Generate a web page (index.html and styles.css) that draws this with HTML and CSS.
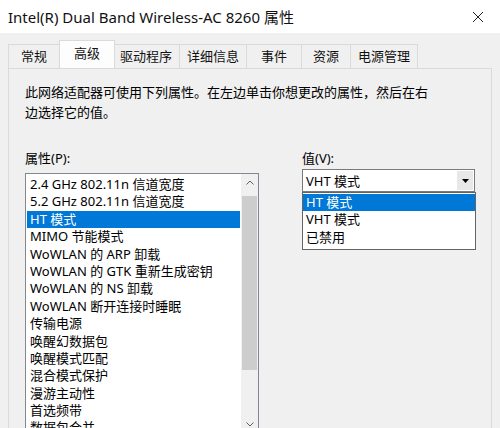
FILE: index.html
```html
<!DOCTYPE html>
<html lang="zh-CN">
<head>
  <meta charset="utf-8" />
  <title>属性</title>
  <link rel="stylesheet" href="styles.css">
</head>
<body>
  <div class="titlebar">
    <span class="title">Intel(R) Dual Band Wireless-AC 8260 属性</span>
    <svg class="close" width="12" height="12" viewBox="0 0 12 12">
      <path d="M1 1L11 11M11 1L1 11" stroke="#222" stroke-width="1" fill="none" />
    </svg>
  </div>

  <div class="tabs">
    <div class="tab">常规</div>
    <div class="tab active">高级</div>
    <div class="tab">驱动程序</div>
    <div class="tab">详细信息</div>
    <div class="tab">事件</div>
    <div class="tab">资源</div>
    <div class="tab">电源管理</div>
  </div>

  <div class="panel">
    <p class="desc">此网络适配器可使用下列属性。在左边单击你想更改的属性，然后在右<br>边选择它的值。</p>

    <div class="fields">
      <div class="col-left">
        <div class="label">属性(P):</div>
        <div class="listbox">
          <ul class="items">
            <li>2.4 GHz 802.11n 信道宽度</li>
            <li>5.2 GHz 802.11n 信道宽度</li>
            <li class="selected">HT 模式</li>
            <li>MIMO 节能模式</li>
            <li>WoWLAN 的 ARP 卸载</li>
            <li>WoWLAN 的 GTK 重新生成密钥</li>
            <li>WoWLAN 的 NS 卸载</li>
            <li>WoWLAN 断开连接时睡眠</li>
            <li>传输电源</li>
            <li>唤醒幻数据包</li>
            <li>唤醒模式匹配</li>
            <li>混合模式保护</li>
            <li>漫游主动性</li>
            <li>首选频带</li>
            <li>数据包合并</li>
          </ul>
          <div class="scrollbar">
            <div class="sb-btn">
              <svg width="8" height="5" viewBox="0 0 8 5"><path d="M0.5 4.5L4 1L7.5 4.5" stroke="#606060" fill="none" /></svg>
            </div>
            <div class="sb-track"><div class="sb-thumb"></div></div>
            <div class="sb-btn">
              <svg width="8" height="5" viewBox="0 0 8 5"><path d="M0.5 0.5L4 4L7.5 0.5" stroke="#606060" fill="none" /></svg>
            </div>
          </div>
        </div>
      </div>

      <div class="col-right">
        <div class="label">值(V):</div>
        <div class="combo">
          <span class="combo-value">VHT 模式</span>
          <span class="combo-arrow">
            <svg width="7" height="4" viewBox="0 0 7 4"><path d="M0 0H7L3.5 4Z" fill="#000" /></svg>
          </span>
        </div>
        <ul class="dropdown">
          <li class="selected">HT 模式</li>
          <li>VHT 模式</li>
          <li>已禁用</li>
        </ul>
      </div>
    </div>
  </div>
</body>
</html>
```

FILE: styles.css
```css
body {
  margin: 0;
  width: 500px;
  height: 428px;
  overflow: hidden;
  background: #f0f0f0;
  font-family: "Noto Sans", "Noto Sans CJK SC", sans-serif;
  font-size: 13px;
  color: #000;
}

.titlebar {
  height: 33px;
  background: #fff;
  display: flex;
  align-items: center;
  justify-content: space-between;
  padding: 0 16px 0 8px;
}

.title {
  font-size: 15px;
  color: #111;
}

.tabs {
  display: flex;
  align-items: flex-end;
  height: 27px;
  margin-top: 8px;
  padding-left: 8px;
}

.tab {
  height: 23px;
  line-height: 22px;
  min-width: 36px;
  padding: 0 7px;
  text-align: center;
  border: 1px solid #dadada;
  border-bottom: none;
  border-left: none;
  background: #f0f0f0;
  color: #111;
}

.tab:first-child {
  border-left: 1px solid #dadada;
  min-width: 36px;
}

.tab:nth-child(5) { min-width: 40px; }
.tab:nth-child(6) { min-width: 34px; }

.tab.active {
  height: 27px;
  line-height: 25px;
  min-width: 40px;
  background: #fdfdfd;
  border-left: 1px solid #dadada;
  margin: 0 -2px 0 -1px;
  position: relative;
  z-index: 1;
}

.panel {
  margin: 0 8px;
  border: 1px solid #dadada;
  background: #f0f0f0;
  height: 400px;
  padding: 13px 16px 0;
}

.desc {
  margin: 0;
  line-height: 20px;
}

.fields {
  display: flex;
  gap: 43px;
  margin-top: 26px;
}

.label {
  line-height: 20px;
  margin-bottom: 5px;
}

.listbox {
  width: 232px;
  height: 259px;
  border: 1px solid #828790;
  background: #fff;
  display: flex;
}

.items, .dropdown {
  list-style: none;
  margin: 0;
  padding: 0;
}

.items {
  flex: 1;
  padding: 2px 1px 0;
}

.items li, .dropdown li {
  height: 17.4px;
  line-height: 17.4px;
  padding-left: 3px;
  white-space: nowrap;
}

.selected {
  background: #0078d7;
  color: #fff;
}

.scrollbar {
  width: 17px;
  display: flex;
  flex-direction: column;
  background: #f0f0f0;
}

.sb-btn {
  height: 17px;
  display: flex;
  align-items: center;
  justify-content: center;
}

.sb-track {
  flex: 1;
  padding: 5px 1px 0;
}

.sb-thumb {
  height: 174px;
  background: #cdcdcd;
}

.combo {
  width: 171px;
  height: 21px;
  border: 1px solid #7a7a7a;
  background: #fff;
  display: flex;
  align-items: center;
  justify-content: space-between;
  margin-top: -4px;
}

.combo-value {
  padding-left: 3px;
}

.combo-arrow {
  width: 16px;
  height: 19px;
  margin-right: 1px;
  background: #e8e8e8;
  display: flex;
  align-items: center;
  justify-content: center;
}

.dropdown {
  width: 172px;
  border: 1px solid #646464;
  background: #fff;
  padding: 1px 0 3px;
}
```
